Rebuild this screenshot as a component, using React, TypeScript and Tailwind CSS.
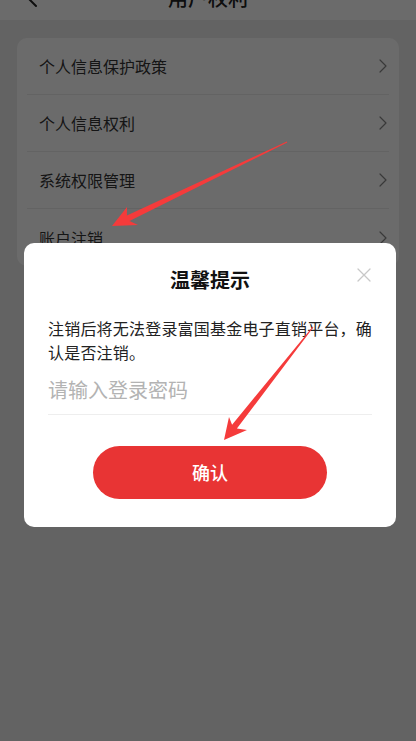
import { useState } from 'react';

const rows = ['个人信息保护政策', '个人信息权利', '系统权限管理', '账户注销'];

function Chevron() {
  return (
    <svg width="8" height="14" viewBox="0 0 8 14" fill="none">
      <path d="M1 1l6 6-6 6" stroke="#888" strokeWidth="1.2" strokeLinecap="round" strokeLinejoin="round" />
    </svg>
  );
}

export default function App() {
  const [password, setPassword] = useState('');
  const [open, setOpen] = useState(true);

  return (
    <div
      className="relative min-h-screen overflow-hidden bg-[#ededed]"
      style={{ fontFamily: '"Noto Sans CJK SC", "Noto Sans", sans-serif' }}
    >
      {/* Header (scrolled, only the bottom shows) */}
      <div className="relative -mt-[24px] flex h-[44px] items-center justify-center bg-white">
        <svg className="absolute left-[26px] top-[12px]" width="12" height="20" viewBox="0 0 12 20" fill="none">
          <path d="M10 2L2 10l8 8" stroke="#222" strokeWidth="2" strokeLinecap="round" strokeLinejoin="round" />
        </svg>
        <span className="text-[20px] font-medium text-[#222]">用户权利</span>
      </div>

      {/* List card */}
      <div className="mx-[17px] mt-[18px] rounded-[10px] bg-white">
        {rows.map((label, i) => (
          <div key={label} className="px-[10px]">
            <div
              className={`flex h-[57px] items-center justify-between pl-[12px] pr-[2px] ${
                i < rows.length - 1 ? 'border-b border-[#ececec]' : ''
              }`}
            >
              <span className="text-[16px] text-[#333]">{label}</span>
              <Chevron />
            </div>
          </div>
        ))}
      </div>

      {open && (
        <>
          {/* Dim overlay */}
          <div className="absolute inset-0 bg-black/[0.58]" />

          {/* Dialog */}
          <div className="absolute left-[24px] top-[243px] w-[372px] rounded-[10px] bg-white px-[24px] pb-[28px] pt-[23px]">
            <button
              onClick={() => setOpen(false)}
              className="absolute right-[25px] top-[25px] flex h-[14px] w-[14px] items-center justify-center"
            >
              <svg width="14" height="14" viewBox="0 0 14 14" fill="none">
                <path d="M1 1l12 12M13 1L1 13" stroke="#c8c8c8" strokeWidth="1.3" strokeLinecap="round" />
              </svg>
            </button>
            <div className="text-center text-[20px] font-bold leading-[28px] text-[#111]">温馨提示</div>
            <p className="mt-[22px] text-[16px] leading-[24px] tracking-[0.2px] text-[#222]">
              注销后将无法登录富国基金电子直销平台，确认是否注销。
            </p>
            <input
              type="password"
              value={password}
              onChange={(e) => setPassword(e.target.value)}
              placeholder="请输入登录密码"
              className="h-[51px] w-full border-b border-[#eeeeee] bg-transparent text-[20px] text-[#333] outline-none placeholder:text-[#b3b3b3]"
            />
            <div className="mt-[31px] flex justify-center">
              <button className="h-[53px] w-[234px] rounded-full bg-[#e83434] text-[18px] font-medium text-white">
                确认
              </button>
            </div>
          </div>
        </>
      )}

      {/* Red annotation arrows */}
      <svg className="pointer-events-none absolute left-0 top-0" width="416" height="741" viewBox="0 0 416 741">
        <polygon
          fill="#f53b3b"
          points="286.8,141.5 126.9,215.5 127,207 112,226 138,225 129.5,220.9 287.2,142.5"
        />
        <polygon
          fill="#f53b3b"
          points="312.6,326.7 232.1,424.7 229,417 224,440 247,430 236.9,428.5 313.4,327.3"
        />
      </svg>
    </div>
  );
}
